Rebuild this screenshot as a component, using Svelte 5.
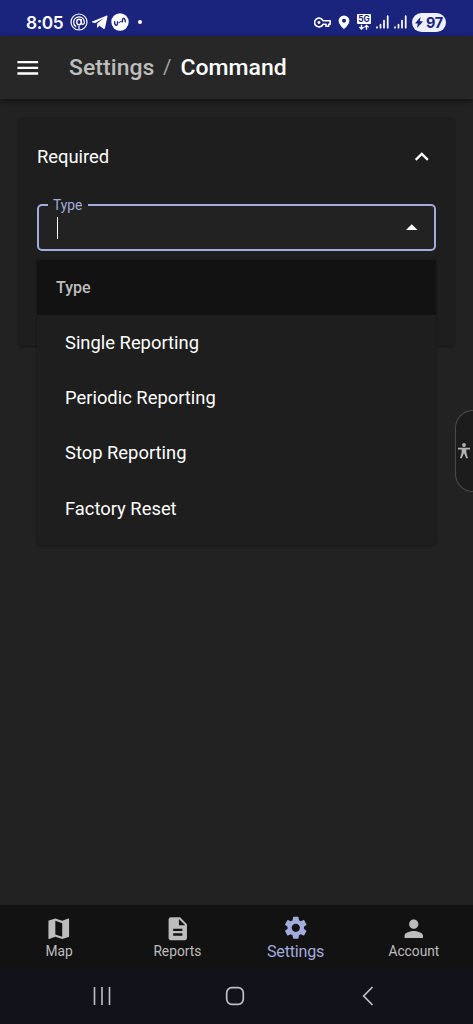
<script>
  const options = ['Single Reporting', 'Periodic Reporting', 'Stop Reporting', 'Factory Reset'];
  const tabs = [
    { label: 'Map', path: 'M20.5 3l-.16.03L15 5.1 9 3 3.36 4.9c-.21.07-.36.25-.36.48V20.5c0 .28.22.5.5.5l.16-.03L9 18.9l6 2.1 5.64-1.9c.21-.07.36-.25.36-.48V3.5c0-.28-.22-.5-.5-.5zM15 19l-6-2.11V5l6 2.11V19z' },
    { label: 'Reports', path: 'M14 2H6c-1.1 0-1.99.9-1.99 2L4 20c0 1.1.89 2 1.99 2H18c1.1 0 2-.9 2-2V8l-6-6zm2 16H8v-2h8v2zm0-4H8v-2h8v2zm-3-5V3.5L18.5 9H13z' },
    { label: 'Settings', active: true, path: 'M19.14 12.94c.04-.3.06-.61.06-.94 0-.32-.02-.64-.07-.94l2.03-1.58c.18-.14.23-.41.12-.61l-1.92-3.32c-.12-.22-.37-.29-.59-.22l-2.39.96c-.5-.38-1.03-.7-1.62-.94l-.36-2.54c-.04-.24-.24-.41-.48-.41h-3.84c-.24 0-.43.17-.47.41l-.36 2.54c-.59.24-1.13.57-1.62.94l-2.39-.96c-.22-.08-.47 0-.59.22L2.74 8.87c-.12.21-.08.47.12.61l2.03 1.58c-.05.3-.09.63-.09.94s.02.64.07.94l-2.03 1.58c-.18.14-.23.41-.12.61l1.92 3.32c.12.22.37.29.59.22l2.39-.96c.5.38 1.03.7 1.62.94l.36 2.54c.05.24.24.41.48.41h3.84c.24 0 .44-.17.47-.41l.36-2.54c.59-.24 1.13-.56 1.62-.94l2.39.96c.22.08.47 0 .59-.22l1.92-3.32c.12-.22.07-.47-.12-.61l-2.01-1.58zM12 15.6c-1.98 0-3.6-1.62-3.6-3.6s1.62-3.6 3.6-3.6 3.6 1.62 3.6 3.6-1.62 3.6-3.6 3.6z' },
    { label: 'Account', path: 'M12 12c2.21 0 4-1.79 4-4s-1.79-4-4-4-4 1.79-4 4 1.79 4 4 4zm0 2c-2.67 0-8 1.34-8 4v2h16v-2c0-2.66-5.33-4-8-4z' }
  ];
</script>

<div class="screen">
  <div class="status">
    <div class="left">
      <span class="time">8:05</span>
      <svg class="at" width="18" height="18" viewBox="0 0 18 18" fill="none" stroke="#fff" stroke-linecap="round">
        <circle cx="9" cy="9" r="8" stroke-width="1.2" />
        <path d="M5.8 13.6A5.4 5.4 0 1 1 14.4 9c0 3.2-3 3.1-3 .7V6.600" stroke-width="1.3" />
        <ellipse cx="9" cy="9" rx="2.300" ry="2.700" stroke-width="1.4" />
        <path d="M9 13v3" stroke-width="1.2" />
      </svg>
      <svg class="plane" width="17" height="15" viewBox="0 0 16 15" fill="#fff">
        <path d="M.7 6.6 14.8.7c.8-.3 1.3.1 1.1 1l-2.4 11.4c-.2.9-.8 1.1-1.5.6L5.4 8.8l7-5.7-8.6 5L.8 7.4c-.7-.2-.7-.6-.1-.8z" />
        <path d="M5.4 8.8 5.7 13l2.2-2.2z" />
      </svg>
      <svg class="disc" width="18" height="18" viewBox="0 0 18 18">
        <circle cx="9" cy="9" r="8.7" fill="#fff" />
        <path d="M3.700 8.800c-.3 2 .7 3.900 2 3.400 1.200-.5.500-2.400 1-3.400M14.200 8.900c.3-2-.7-3.900-2-3.400-1.200.5-.5 2.400-1 3.400" fill="none" stroke="#1b247d" stroke-width="1.400" stroke-linecap="round" />
        <path d="M8.200 9.300h.1M9.800 8.500h.1" stroke="#1b247d" stroke-width="1.300" stroke-linecap="round" />
      </svg>
      <span class="dot"></span>
    </div>
    <div class="right">
      <svg class="key" width="17" height="11" viewBox="0 0 17 11" fill="none" stroke="#fff" stroke-width="1.6" stroke-linejoin="round">
        <path d="M9 3.7A4.4 4.4 0 1 0 9 7.3h3v1.9h2.7V7.3h1.5V3.7z" />
        <circle cx="5" cy="5.5" r="1.4" fill="#fff" stroke="none" />
      </svg>
      <svg class="pin" width="12" height="15" viewBox="0 0 12 15">
        <path d="M6 .4A5.4 5.4 0 0 0 .6 5.8C.6 9.6 6 14.2 6 14.2s5.4-4.6 5.4-8.4A5.4 5.4 0 0 0 6 .4zM6 7.7a2 2 0 1 1 0-4 2 2 0 0 1 0 4z" fill="#fff" />
      </svg>
      <svg class="fiveg" width="14" height="16" viewBox="0 0 14 16">
        <rect width="14" height="10" rx="1" fill="#fff" />
        <text x="7" y="8" text-anchor="middle" font-family="Inter, sans-serif" font-size="8.3" font-weight="700" fill="#1b247d">5G</text>
        <path d="M4.5 10.800v4.200M2.400 13l2.100 2.100L6.600 13M9.500 15.700v-4.400M7.400 13.400l2.100-2.100 2.100 2.100" fill="none" stroke="#fff" stroke-width="1.3" />
      </svg>
      {#each [0, 1] as n (n)}
        <svg class="signal" width="13" height="14" viewBox="0 0 13 14" stroke="#fff" stroke-width="1.7" stroke-linecap="round">
          <path d="M1 12.2v.5M4.500 9.700v3M8 5.600v7.100M11.700 1.200v11.500" />
        </svg>
      {/each}
      <div class="battery">
        <svg width="8" height="11" viewBox="0 0 8 11" fill="#1b247d"><path d="M5.6 0 .3 6.1c-.2.3-.1.5.2.5h2.3L2 11l5.6-6.1c.2-.3.1-.6-.2-.6H4.900z" /></svg>
        <span>97</span>
      </div>
    </div>
  </div>

  <header>
    <svg class="icon" viewBox="0 0 24 24"><path d="M3 18h18v-2H3v2zm0-5h18v-2H3v2zm0-7v2h18V6H3z" /></svg>
    <div class="crumbs"><span class="parent">Settings</span><span class="slash">/</span><span>Command</span></div>
  </header>

  <main>
    <section class="card">
      <div class="summary">
        <span>Required</span>
        <svg class="icon" viewBox="0 0 24 24"><path d="m12 8-6 6 1.410 1.410L12 10.830l4.590 4.580L18 14z" /></svg>
      </div>
      <div class="field">
        <span class="label">Type</span>
        <span class="caret"></span>
        <svg class="icon" viewBox="0 0 24 24"><path d="m7 14 5-5 5 5z" /></svg>
        <div class="menu">
          <div class="group">Type</div>
          <ul>
            {#each options as option (option)}
              <li>{option}</li>
            {/each}
          </ul>
        </div>
      </div>
    </section>
    <div class="handle">
      <svg width="14" height="16" viewBox="0 0 14 16" fill="#b3b3b3">
        <circle cx="7" cy="2" r="1.900" />
        <path d="M1 4.700h12v1.900H9.300v3l1.700 5.600H9.200L7.400 10.800h-.8l-1.800 4.400H3l1.700-5.600v-3H1z" />
      </svg>
    </div>
  </main>

  <nav>
    {#each tabs as tab (tab.label)}
      <div class="tab" class:active={tab.active}>
        <svg class="icon" viewBox="0 0 24 24"><path d={tab.path} /></svg>
        <span>{tab.label}</span>
      </div>
    {/each}
  </nav>

  <div class="system">
    <svg width="18" height="18" viewBox="0 0 18 18" stroke="#bfc0c4" stroke-width="1.600"><path d="M1.500 0v18M9 0v18M16.500 0v18" /></svg>
    <svg width="20" height="20" viewBox="0 0 20 20"><rect x="1.700" y="1.700" width="16.600" height="16.600" rx="5.200" fill="none" stroke="#bfc0c4" stroke-width="1.700" /></svg>
    <svg width="12" height="20" viewBox="0 0 12 20"><path d="m10.500 1-8.800 9 8.800 9" fill="none" stroke="#bfc0c4" stroke-width="1.700" /></svg>
  </div>
</div>

<style>
  :global(body) { background: #222; }
  .screen { display: flex; flex-direction: column; width: 473px; height: 1024px; overflow: hidden; background: #222; color: #fff; font-family: Roboto, sans-serif; font-size: 18.370px; letter-spacing: 0; }
  svg { display: block; flex: none; }
  .icon { width: 27.550px; height: 27.550px; fill: currentColor; }

  .status { display: flex; justify-content: space-between; box-sizing: border-box; flex: none; height: 36px; padding: 8px 27px 0 26px; background: #1b247d; font-family: Inter, sans-serif; letter-spacing: 0; }
  .left, .right { display: flex; align-items: center; height: 28px; }
  .time { width: 43.500px; font-size: 17.300px; font-weight: 600; letter-spacing: -0.400px; }
  .plane { margin-left: 3px; }
  .disc { margin-left: 3px; }
  .dot { width: 4px; height: 4px; margin-left: 9px; border-radius: 50%; background: #fff; }
  .pin { margin-left: 7px; }
  .fiveg { margin-left: 7px; }
  .signal { margin-left: 5px; }
  .battery { display: flex; align-items: center; gap: 3px; box-sizing: border-box; width: 34px; height: 19px; margin-left: 5px; padding-left: 3px; border-radius: 10px; background: #eef0fb; color: #1b247d; font-size: 14.500px; font-weight: 700; letter-spacing: -0.500px; }

  header { position: relative; z-index: 1; display: flex; align-items: center; box-sizing: border-box; flex: none; height: 63px; padding-left: 14px; background: #272727; box-shadow: 0 2px 5px rgba(0, 0, 0, 0.350), 0 4px 9px rgba(0, 0, 0, 0.140); }
  .crumbs { display: flex; margin-left: 27.500px; font-size: 22.960px; font-weight: 500; letter-spacing: 0.050px; }
  .parent { color: #bdbdbd; }
  .slash { margin: 0 9px 0 8.500px; color: #a4a4a4; font-size: 20.500px; font-weight: 400; line-height: 27px; }

  main { position: relative; flex: 1; padding: 18px; }
  .card { box-sizing: border-box; height: 229px; padding: 0 19px; border-radius: 4.600px; background: #1e1e1e; box-shadow: 0 1px 2px rgba(0, 0, 0, 0.400); }
  .summary { display: flex; align-items: center; justify-content: space-between; height: 79px; }
  .field { position: relative; display: flex; align-items: center; justify-content: space-between; box-sizing: border-box; height: 47px; margin-top: 8px; padding: 0 8px 0 18px; border: 2px solid #a3abdc; border-radius: 5px; background: #222; }
  .label { position: absolute; top: -11.500px; left: 9px; padding: 0 6px 0 5px; background: linear-gradient(#1e1e1e 55%, #222 55%); color: #a3abdc; font-size: 13.780px; line-height: 20px; letter-spacing: 0; }
  .caret { width: 1px; height: 22px; background: #fff; }
  .menu { position: absolute; top: 54px; left: -2px; right: -2px; height: 285px; border-radius: 0 0 4.600px 4.600px; overflow: hidden; background: #1e1e1e; z-index: 2; box-shadow: 0 1px 3px rgba(0, 0, 0, 0.400); }
  .group { height: 55px; padding-left: 19px; background: #121212; color: #bdbdbd; font-size: 16.070px; font-weight: 500; line-height: 55px; letter-spacing: 0; }
  ul { margin: 0; padding: 0; list-style: none; }
  li { height: 55.200px; padding-left: 28px; line-height: 55.500px; }
  .handle { position: absolute; right: 0; top: 311px; display: flex; align-items: center; box-sizing: border-box; width: 18px; height: 82px; padding-left: 1px; border: 1px solid #4b4b4b; border-right: 0; border-radius: 18px 0 0 18px; background: #1c1c1c; }

  nav { display: grid; grid-template-columns: repeat(4, 1fr); flex: none; height: 64px; background: #121212; color: #bdbdbd; }
  .tab { display: flex; flex-direction: column; align-items: center; padding-top: 10px; font-size: 13.780px; line-height: 17px; }
  .tab span { margin-top: 0.300px; }
  .active { color: #a3abdc; font-size: 16.070px; padding-top: 9px; letter-spacing: -0.180px; }
  .active span { margin-top: 1.500px; }
  .system { display: grid; grid-template-columns: 132px 133px 133px; justify-content: center; justify-items: center; align-items: center; box-sizing: border-box; flex: none; height: 55px; padding: 0 3px 2px 0; background: #12131a; }
</style>
